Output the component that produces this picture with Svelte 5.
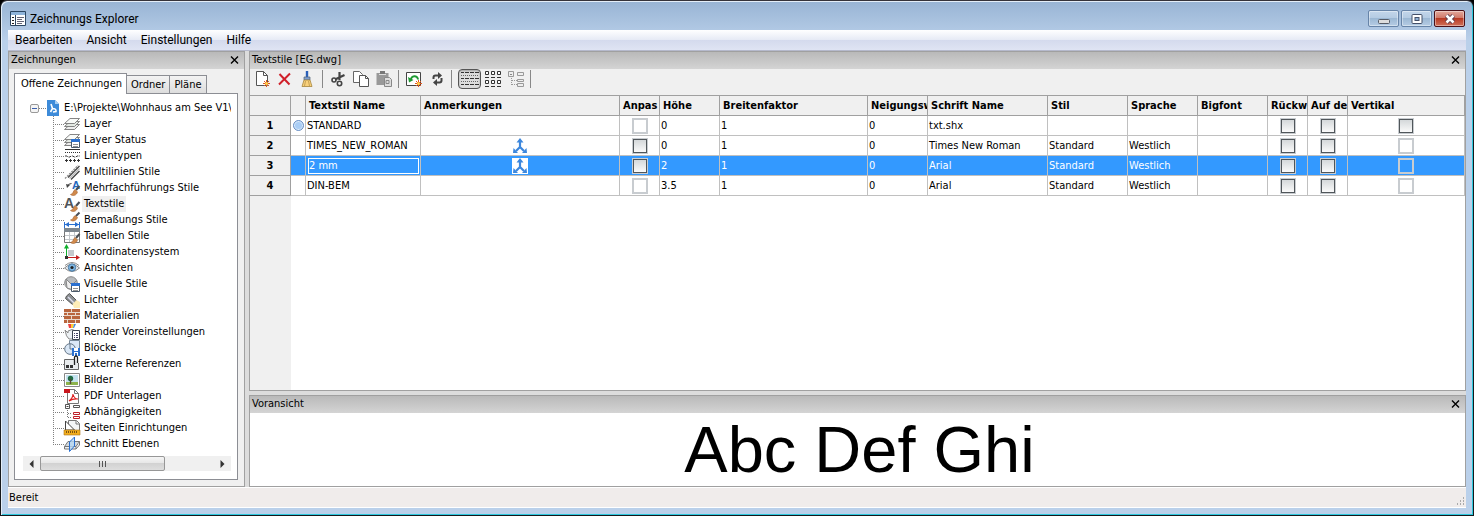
<script>
  const menus = ['Bearbeiten', 'Ansicht', 'Einstellungen', 'Hilfe']
  const tabs = ['Offene Zeichnungen', 'Ordner', 'Pläne']

  const brush = '<path d="M15.500 6l-3.500 4" stroke="#4a4f55" stroke-width="2"/><path d="M6.500 14.500c2.500 0 2.500-3.500 4.500-5l2.500 2.500c-1 3.500-4.500 4.500-7 2.500z" fill="#d08a4c" stroke="#a5602c" stroke-width=".6"/>'
  const win = '<path d="M7.500 7.500h8v8h-8z" fill="#fff" stroke="#4a5a6a"/><path d="M7 7h9v3H7z" fill="#2a70d0"/><path d="M9 12.500h5M9 14.500h5" stroke="#777" stroke-width=".8"/>'
  const layers = '<path d="M6 8.500h9.500l-5 5H.500z" fill="#eee" stroke="#777" stroke-width=".9"/><path d="M6 5.500h9.500l-5 5H.500z" fill="#e4eae4" stroke="#777" stroke-width=".9"/><path d="M6 2.500h9.500l-5 5H.500z" fill="#f8faf8" stroke="#777" stroke-width=".9"/>'

  const icons = {
    app: '<path d="M.500.500h15v14H.500z" fill="#fff" stroke="#2d4763"/><path d="M1 1h14v3H1z" fill="#8fb4da"/><path d="M5.500 4v10" stroke="#2d4763"/><path d="M2 6.500h2M2 9.500h2M2 12.500h2" stroke="#222"/><path d="M7 6.500h7M7 8.500h5M7 10.500h7M7 12.500h5" stroke="#667"/>',
    layer: layers,
    layerState: layers + win,
    linetype: '<path d="M1 1.500h15" stroke="#333"/><path d="M1 4.500h15" stroke="#333" stroke-dasharray="1 1"/><path d="M1 8h2l1 1h2l1-1h2l1 1h2l1-1h3" fill="none" stroke="#333" stroke-dasharray="3 1"/><path d="M1 12.500h3m1 0h3m1 0h3m1 0h3M2.500 11v3m4-3v3m4-3v3m4-3v3" stroke="#333"/>',
    multiline: '<path d="M4 13.500L15.500 2M7 15.500L15.500 7" stroke="#444" stroke-width="1.300"/><path d="M5.500 14.500L15.500 4.500" stroke="#bbb" stroke-width="1.500"/><path d="M1 14.500L14 1.500" stroke="#888" stroke-width="1.300" stroke-dasharray="2 1"/>',
    mleader: '<text x="8" y="9" font-size="11" font-weight="bold" font-family="Liberation Sans, sans-serif" fill="#2468bd">A</text><path d="M3.500 6.500Q4 3.500 7.500 3.500" stroke="#444" fill="none"/><path d="M2 4l4 1-3 3z" fill="#444"/>' + brush,
    textstyle: '<text x="0" y="12" font-size="14" font-weight="bold" font-family="Liberation Sans, sans-serif" fill="#50555a">A</text>' + brush,
    dimstyle: '<path d="M15.500.500l-3.500 3.500" stroke="#4a4f55" stroke-width="2"/><path d="M6.500 8c2.500 0 2.500-3 4.500-4.500l2.500 2c-1 3-4.500 4.500-7 2.500z" fill="#d08a4c" stroke="#a5602c" stroke-width=".6"/><path d="M.500 10v6M15.500 10v6M1 12.500h14" stroke="#2a70d0"/><path d="M1 12.500l4-2.500v5zM15 12.500l-4-2.500v5z" fill="#2a70d0"/>',
    tablestyle: '<path d="M.500.500h15v14H.500z" fill="#fff" stroke="#777"/><path d="M0 0h16v4H0z" fill="#7d868e"/><path d="M1 7.500h14M1 11.500h14M5.500 4v10M10.500 4v10" stroke="#c4c8cc"/>' + brush,
    ucs: '<path d="M4 6h6v6H4z" fill="#c4c9cd"/><path d="M2.500 13V3" stroke="#0fae2c"/><path d="M0 4.500L2.500 0 5 4.500z" fill="#0fae2c"/><path d="M3 13.500h10" stroke="#c41f1f"/><path d="M12 11l4 2.500-4 2.500z" fill="#c41f1f"/><path d="M1 12h3v3H1z" fill="#333"/>',
    view: '<path d="M.500 8Q8 .500 15.500 8 8 15 .500 8z" fill="#e4e8ec" stroke="#888"/><circle cx="8" cy="7.500" r="3.700" fill="#7db6e2" stroke="#4a7aa4"/><circle cx="8" cy="7.500" r="1.600" fill="#222"/><path d="M1 5.500Q8-.500 15 5.500" fill="none" stroke="#888"/>',
    visual: '<circle cx="7" cy="7" r="6.300" fill="#b9bcbf" stroke="#888"/><path d="M2 3l6 6V13.500L3 12zM8 9l5-5" fill="#eee" stroke="#888"/>' + win,
    light: '<path d="M2.500 4l3-2.500 7 7-4 4-7-6z" fill="#8a8e91" stroke="#555"/><path d="M4 5l6 6" stroke="#dde" stroke-width="1.400"/><path d="M8.500 12l4-4 3.500 2v6h-6z" fill="#ffeeb8"/>',
    material: '<path d="M0 1h16v14H0z" fill="#e9d8cc"/><path d="M0 1h7v3H0zM8 1h8v3H8zM0 5h3v2H0zM4 5h7v2H4zM12 5h4v2h-4zM0 8h7v3H0zM8 8h8v3H8zM0 12h3v3H0zM4 12h7v3H4zM12 12h4v3h-4z" fill="#b9653d"/>',
    render: '<path d="M4 0h3v4H5z" fill="#e44"/><path d="M7 0h3l-1 4H7z" fill="#fc3"/><path d="M10 0h2l-2 4H9z" fill="#48d"/><path d="M1 6l3 3V7q4-3 8 0v8H5Q2 13 1 6z" fill="#edf1f4" stroke="#888"/><path d="M8.500 6.500h7v9h-7z" fill="#fff" stroke="#3c4650"/><path d="M10 9.500h1m1 0h2M10 11.500h1m1 0h2M10 13.500h1m1 0h2" stroke="#446"/>',
    block: '<path d="M5.500.500h10v10h-10z" fill="#dbe8f7" stroke="#789"/><circle cx="6" cy="9" r="5.300" fill="#d9e7f6" stroke="#667788"/><path d="M6 4v5h5" fill="none" stroke="#678"/><path d="M8 8h8v8H8z" fill="#2a70d0"/><path d="M10 8h4v3h-4zM10 12h4v4h-4z" fill="#fff"/><path d="M11 13h2v3h-2z" fill="#2a70d0"/>',
    xref: '<path d="M10 3.500H.500v10h14V7" fill="#e9ecee" stroke="#666"/><path d="M2 9h3v3H2zM6 9h3v3H6z" fill="#333"/><path d="M10.500 9V1.500a1 1 0 0 1 3 0V7" fill="none" stroke="#222" stroke-width="1.300"/>',
    image: '<path d="M.500 1.500h15v13H.500z" fill="#fff" stroke="#888"/><path d="M2 3h12v7H2z" fill="#c4e2ef"/><path d="M2 10h12v3H2z" fill="#8cb34c"/><circle cx="6.500" cy="6.500" r="2.700" fill="#226b45"/><path d="M6.500 7v5" stroke="#543" stroke-width="1.400"/>',
    pdf: '<path d="M3.500 1.500h7l4 4v10h-11z" fill="#fff" stroke="#777"/><path d="M10.500 1.500v4h4" fill="none" stroke="#777"/><path d="M0 1h6v4H0z" fill="#c9171e"/><path d="M5 13q4-3 4-7 1 5 5 5-5-.500-9 2z" fill="none" stroke="#d22" stroke-width="1.200"/>',
    depend: '<path d="M1.500.500h4v4h-4zM9.500 1.500h6v2h-6z" fill="#fff" stroke="#555"/><path d="M2.500 2.500h2" stroke="#444"/><path d="M3.500 6v8M4 9.500h4M4 13.500h4" stroke="#777" stroke-dasharray="1 1"/><path d="M9.500 8.500h6v2h-6zM9.500 12.500h6v2h-6z" fill="#fff" stroke="#c0202a"/>',
    page: '<path d="M4.500.500h8l3 3v10h-11z" fill="#f4f6f7" stroke="#777"/><path d="M1.500 10V1l9 9z" fill="#fff" stroke="#444"/><path d="M12 1v3h3" fill="none" stroke="#777"/><path d="M0 10h16v5H0z" fill="#f3ae1e" stroke="#a9741a" stroke-width=".6"/><path d="M2.500 11v2m2-2v2m2-2v2m2-2v2m2-2v2m2-2v2" stroke="#7c5310"/>',
    section: '<path d="M4 5.500h11.500L12 10.500H.500z" fill="#d3d9dc" stroke="#777"/><path d="M.500 10.500h11.500v2.500H.500zM15.500 5.500V9L12 13" fill="#eef1f2" stroke="#777"/><path d="M5.500 6l5-5v9l-5 5.500z" fill="#b8d8f4" fill-opacity=".8" stroke="#2a70d0"/>',
    root: '<path d="M1 0h8l4 4v12H1z" fill="#3d8bd9"/><path d="M9 0l4 4H9z" fill="#a9cff2"/><path d="M5 4l1.500 4.500L4.500 12M6.500 8.500q4 0 3.500 3l-3 .500" fill="none" stroke="#fff" stroke-width="1.600"/>',
    newItem: '<path d="M2.500.500h7l4 4v10h-11z" fill="#fff" stroke="#555"/><path d="M9.500.500v4h4" fill="none" stroke="#555"/><path d="M9 12.500h7M12.500 9v7M10 10l5 5M15 10l-5 5" stroke="#e2571f"/><circle cx="12.500" cy="12.500" r="1.500" fill="#ffd24a"/>',
    remove: '<path d="M2.500 3l10 10.500M13 2.500L2 13.500" stroke="#d0202a" stroke-width="2"/>',
    broom: '<path d="M7 0v7" stroke="#2a60b8" stroke-width="2.400"/><path d="M4 6h6v3H4z" fill="#7f9fd0" stroke="#567" stroke-width=".7"/><path d="M4 9h6l2 6.500H2z" fill="#f9d17c" stroke="#a5843c" stroke-width=".8"/><path d="M5.500 10l-1 5m4-5l1 5" stroke="#b8934a" stroke-width=".8"/>',
    cut: '<path d="M9.500 1v8M14.500 4L5 8.500" stroke="#444" stroke-width="2.200"/><circle cx="4" cy="9" r="2" fill="none" stroke="#444" stroke-width="1.600"/><circle cx="9.500" cy="12.500" r="2.200" fill="none" stroke="#444" stroke-width="1.600"/>',
    copy: '<path d="M.500.500h6l3 3v8h-9z" fill="#fff" stroke="#666"/><path d="M6.500 4.500h6l3 3v8h-9z" fill="#fff" stroke="#555"/><path d="M12.500 4.500v3h3" fill="none" stroke="#555"/>',
    paste: '<path d="M.500 2h12v12H.500z" fill="#999"/><path d="M4 0h5v3H4z" fill="#777"/><path d="M3 3.500h7" stroke="#ddd"/><path d="M8.500 6.500h5l2 2v7h-7z" fill="#ddd" stroke="#888"/><path d="M10 9.500h3v3h-3z" fill="none" stroke="#888"/>',
    regen: '<path d="M.500 1.500h14v13H.500z" fill="#fff" stroke="#444"/><path d="M5 9a3.500 3.500 0 0 1 7-.500" fill="none" stroke="#1d9a32" stroke-width="2"/><path d="M2 6l1 5.500 4.500-2.500z" fill="#1d9a32"/><path d="M9 12.500h7M12.500 9v7M10 10l5 5M15 10l-5 5" stroke="#e2571f"/><circle cx="12.500" cy="12.500" r="1.500" fill="#ffd24a"/>',
    sync: '<path d="M4.500 8V6.500q0-2 2-2h3" fill="none" stroke="#444" stroke-width="2"/><path d="M9 1l4 3.500L9 8z" fill="#444"/><path d="M12.500 7v2.500q0 2-2 2H8" fill="none" stroke="#444" stroke-width="2"/><path d="M8 8l-4 3.500L8 15z" fill="#444"/>',
    details: '<path d="M-1 1.500h3m1 0h4m1 0h4m1 0h4M-1 7.500h3m1 0h4m1 0h4m1 0h4M-1 13.500h3m1 0h4m1 0h4m1 0h4" stroke="#333"/><path d="M-1 4.500h18M-1 10.500h18" stroke="#666" stroke-dasharray="1 1"/>',
    grid: '<path d="M.500.500h3v3h-3zm6 0h3v3h-3zm6 0h3v3h-3zm-12 9h3v3h-3zm6 0h3v3h-3zm6 0h3v3h-3z" fill="#fff" stroke="#333"/><path d="M0 6.500h4m2 0h4m2 0h4M0 15.500h4m2 0h4m2 0h4" stroke="#333"/>',
    treeView: '<path d="M.500.500h5v5h-5zM9.500 1.500h6v3h-6zM9.500 8.500h6v2h-6zM9.500 12.500h6v3h-6z" fill="#eee" stroke="#999"/><path d="M2 3.500h2" stroke="#888"/><path d="M3.500 7v7M4 9.500h5M4 13.500h5" stroke="#999" stroke-dasharray="1 1"/>',
    annotative: '<path d="M8 9V3M8 9l-4 4M8 9l4 4" stroke="#3c87dd" stroke-width="2.200"/><path d="M4.500 4.500L8 0l3.500 4.500zM1 15l.500-5 4.500 5zM15 15l-.500-5-4.500 5z" fill="#3c87dd"/>'
  }

  const nodes = [
    ['layer', 'Layer'],
    ['layerState', 'Layer Status'],
    ['linetype', 'Linientypen'],
    ['multiline', 'Multilinien Stile'],
    ['mleader', 'Mehrfachführungs Stile'],
    ['textstyle', 'Textstile'],
    ['dimstyle', 'Bemaßungs Stile'],
    ['tablestyle', 'Tabellen Stile'],
    ['ucs', 'Koordinatensystem'],
    ['view', 'Ansichten'],
    ['visual', 'Visuelle Stile'],
    ['light', 'Lichter'],
    ['material', 'Materialien'],
    ['render', 'Render Voreinstellungen'],
    ['block', 'Blöcke'],
    ['xref', 'Externe Referenzen'],
    ['image', 'Bilder'],
    ['pdf', 'PDF Unterlagen'],
    ['depend', 'Abhängigkeiten'],
    ['page', 'Seiten Einrichtungen'],
    ['section', 'Schnitt Ebenen']
  ]

  // null is a divider
  const tools = [
    ['newItem', 'Neu'], ['remove', 'Löschen'], ['broom', 'Bereinigen'], null,
    ['cut', 'Ausschneiden'], ['copy', 'Kopieren'], ['paste', 'Einfügen'], null,
    ['regen', 'Regenerieren'], ['sync', 'Aktualisieren'], null,
    ['details', 'Details'], ['grid', 'Symbole'], ['treeView', 'Baum'], null
  ]

  const columns = [
    ['Textstil Name', 115],
    ['Anmerkungen', 199],
    ['Anpas', 40],
    ['Höhe', 60],
    ['Breitenfaktor', 148],
    ['Neigungsw', 60],
    ['Schrift Name', 120],
    ['Stil', 80],
    ['Sprache', 70],
    ['Bigfont', 70],
    ['Rückw', 40],
    ['Auf de', 40],
    ['Vertikal', 0]
  ]

  let styles = $state([
    { name: 'STANDARD', current: true, annotative: false, height: '0', font: 'txt.shx', style: '', lang: '', vertical: true },
    { name: 'TIMES_NEW_ROMAN', annotative: true, height: '0', font: 'Times New Roman', style: 'Standard', lang: 'Westlich' },
    { name: '2 mm', annotative: true, height: '2', font: 'Arial', style: 'Standard', lang: 'Westlich' },
    { name: 'DIN-BEM', annotative: false, height: '3.5', font: 'Arial', style: 'Standard', lang: 'Westlich' }
  ])

  let tab = $state(0)
  let node = $state('textstyle')
  let row = $state(2)
  let mode = $state('details')

  function runTool(id) {
    if (['details', 'grid', 'treeView'].includes(id)) mode = id
  }
</script>

{#snippet icon(id)}
  <svg class="icon" width="16" height="16" viewBox="0 0 16 16" fill="none" aria-hidden="true">{@html icons[id]}</svg>
{/snippet}

{#snippet caption(text)}
  <header class="caption">
    <span>{text}</span>
    <button class="shut" aria-label="{text} schließen">
      <svg width="9" height="8" viewBox="0 0 9 8"><path d="M1 .500l7 7M8 .500l-7 7" stroke="#000" stroke-width="1.400" /></svg>
    </button>
  </header>
{/snippet}

<div class="window">
  <div class="titlebar">
    {@render icon('app')}
    <h1>Zeichnungs Explorer</h1>
    <div class="controls">
      <button aria-label="Minimieren"><svg width="12" height="12" viewBox="0 0 12 12"><rect x=".5" y="6.500" width="11" height="4" rx="1" fill="#ddd" stroke="#555b66" /></svg></button>
      <button aria-label="Maximieren"><svg width="12" height="12" viewBox="0 0 12 12"><rect x="1" y="1.500" width="10" height="9" rx="1" fill="#fff" stroke="#445069" /><rect x="4" y="4.500" width="4" height="3" fill="#8fb0d4" stroke="#445069" /></svg></button>
      <button class="exit" aria-label="Schließen"><svg width="12" height="12" viewBox="0 0 12 12"><path d="M2.500 2.500l7 7M9.500 2.500l-7 7" stroke="#5c4050" stroke-width="4.500" /><path d="M2.500 2.500l7 7M9.500 2.500l-7 7" stroke="#fff" stroke-width="2.500" /></svg></button>
    </div>
  </div>

  <nav class="menu">
    {#each menus as item}<button>{item}</button>{/each}
  </nav>

  <main>
    <section class="panel explorer">
      {@render caption('Zeichnungen')}
      <div class="tabs" role="tablist">
        {#each tabs as label, i}
          <button role="tab" aria-selected={tab === i} class:active={tab === i} onclick={() => (tab = i)}>{label}</button>
        {/each}
      </div>
      <div class="page">
        <div class="root">
          <button class="toggle" aria-label="Zuklappen"></button>
          <i class="dots"></i>
          {@render icon('root')}
          <span>E:\Projekte\Wohnhaus am See V1\</span>
        </div>
        <ul>
          {#each nodes as [id, label]}
            <li>
              <i class="dots"></i>
              <button class:selected={node === id} onclick={() => (node = id)}>
                {@render icon(id)}<span>{label}</span>
              </button>
            </li>
          {/each}
        </ul>
        <div class="scrollbar">
          <button aria-label="Nach links"><svg width="5" height="8" viewBox="0 0 5 8"><path d="M4.500 0v8L.500 4z" fill="#333" /></svg></button>
          <div class="track"><div class="thumb"><svg width="8" height="6" viewBox="0 0 8 6"><path d="M.500 0v6M3.500 0v6M6.500 0v6" stroke="#555" /></svg></div></div>
          <button aria-label="Nach rechts"><svg width="5" height="8" viewBox="0 0 5 8"><path d="M.500 0v8l4-4z" fill="#333" /></svg></button>
        </div>
      </div>
    </section>

    <div class="right">
      <section class="panel list">
        {@render caption('Textstile [EG.dwg]')}
        <div class="toolbar" role="toolbar">
          {#each tools as tool}
            {#if tool}
              <button
                aria-label={tool[1]}
                class:first={tool[0] === 'details'}
                class:pressed={mode === tool[0]}
                onclick={() => runTool(tool[0])}
              >{@render icon(tool[0])}</button>
            {:else}
              <hr>
            {/if}
          {/each}
        </div>
        <div class="sheet">
          <table>
            <colgroup>
              <col style:width="41px"><col style:width="15px">
              {#each columns as [, width]}<col style:width={width ? `${width}px` : 'auto'}>{/each}
            </colgroup>
            <thead>
              <tr>
                <th></th><th></th>
                {#each columns as [label]}<th>{label}</th>{/each}
              </tr>
            </thead>
            <tbody>
              {#each styles as s, i}
                <tr class:selected={row === i} onclick={() => (row = i)}>
                  <th scope="row">{i + 1}</th>
                  <td class="mark">{#if s.current}<i class="current"></i>{/if}</td>
                  <td class="name">
                    {#if row === i}<input type="text" aria-label="Textstil Name" bind:value={s.name}>{:else}{s.name}{/if}
                  </td>
                  <td class="mid">{#if s.annotative}<span class="anno">{@render icon('annotative')}</span>{/if}</td>
                  <td class="mid"><input type="checkbox" aria-label="Anpassen" disabled={!s.annotative}></td>
                  <td>{s.height}</td>
                  <td>1</td>
                  <td>0</td>
                  <td>{s.font}</td>
                  <td>{s.style}</td>
                  <td>{s.lang}</td>
                  <td></td>
                  <td class="mid"><input type="checkbox" aria-label="Rückwärts"></td>
                  <td class="mid"><input type="checkbox" aria-label="Auf dem Kopf"></td>
                  <td class="mid"><input type="checkbox" aria-label="Vertikal" disabled={!s.vertical}></td>
                </tr>
              {/each}
            </tbody>
          </table>
        </div>
      </section>

      <section class="panel preview">
        {@render caption('Voransicht')}
        <p>Abc Def Ghi</p>
      </section>
    </div>
  </main>

  <footer>
    <span>Bereit</span>
    <svg width="12" height="12" viewBox="0 0 12 12"><path d="M9 3h1M6 6h1m2 0h1M3 9h1m2 0h1m2 0h1" stroke="#aaa" stroke-width="2" /></svg>
  </footer>
</div>

<style>
  :global(body) {
    margin: 0;
    background: #000;
  }

  .window {
    display: flex;
    flex-direction: column;
    box-sizing: border-box;
    min-height: 100vh;
    padding: 0 7px 7px;
    border: 1px solid #15181c;
    border-top-color: #35333a;
    border-radius: 7px 7px 0 0;
    background: linear-gradient(#98b4d4, #bad0ea 40px, #bad0ea);
    box-shadow: inset 1px 1px #e4eef8, inset -1px -1px #2cc8dd;
    font: 11px/16px "DejaVu Sans Condensed", "Noto Sans", sans-serif;
    color: #000;
  }

  button {
    padding: 0;
    border: 0;
    background: none;
    font: inherit;
    color: inherit;
  }

  svg {
    display: block;
    flex: none;
  }

  .icon {
    overflow: visible;
  }

  .titlebar {
    display: flex;
    align-items: center;
    gap: 4px;
    height: 29px;
    padding: 6px 1px 0 2px;
    box-sizing: border-box;
  }

  h1 {
    flex: 1;
    margin: 0;
    font: 12px/16px Roboto, "Open Sans", sans-serif;
  }

  .controls {
    display: flex;
    gap: 2px;
  }

  .controls button {
    display: grid;
    place-items: center;
    box-sizing: border-box;
    width: 31px;
    height: 17px;
    border: 1px solid #6784a8;
    border-radius: 2px;
    background: linear-gradient(#c3d6ea, #b3cae2 50%, #9cb8d4 50%, #b5cce4);
    box-shadow: inset 0 0 0 1px #ffffff66;
  }

  .controls .exit {
    border-color: #4b1017;
    background: linear-gradient(#e3a99c, #cf7463 50%, #b83a23 50%, #d0715a);
  }

  .menu {
    display: flex;
    gap: 14px;
    height: 20px;
    padding: 0 7px;
    background: linear-gradient(#fff, #e6eaf5 50%, #d4daed 50%, #dfe4f3);
    border-bottom: 1px solid #b5b9cc;
    font: 12px/20px Roboto, "Open Sans", sans-serif;
  }

  main {
    display: flex;
    gap: 4px;
    flex: 1;
    background: #dcdcdc;
    min-width: 0;
  }

  .panel {
    display: flex;
    flex-direction: column;
    box-sizing: border-box;
    border: 1px solid #a0a0a0;
    background: #f0f0f0;
  }

  .explorer {
    flex: none;
    width: 237px;
  }

  .right {
    display: flex;
    flex-direction: column;
    flex: 1;
    gap: 4px;
    min-width: 0;
  }

  .list {
    flex: 1;
  }

  .caption {
    display: flex;
    align-items: center;
    justify-content: space-between;
    height: 17px;
    padding: 0 5px 2px 2px;
    box-sizing: border-box;
    background: linear-gradient(#b9b9b9, #d4d4d4);
  }

  .tabs {
    display: flex;
    align-items: flex-end;
    height: 24px;
    padding-left: 5px;
  }

  .tabs button {
    height: 18px;
    padding: 0 4px;
    border: 1px solid #8c8e94;
    border-width: 1px 1px 0 0;
    background: linear-gradient(#f3f3f3, #ddd);
  }

  .tabs .active {
    position: relative;
    height: 21px;
    margin-bottom: -1px;
    padding: 0 4px 0 6px;
    border-left-width: 1px;
    background: #fff;
  }

  .page {
    flex: 1;
    margin: 0 6px 6px 5px;
    padding: 6px 6px 7px 8px;
    border: 1px solid #8c8e94;
    background: #fff;
    overflow: hidden;
  }

  .root {
    display: flex;
    align-items: center;
    height: 16px;
    padding-left: 7px;
    overflow: hidden;
    white-space: nowrap;
  }

  .root span {
    flex: 1;
    margin-left: 2px;
    overflow: hidden;
  }

  .toggle {
    flex: none;
    width: 9px;
    height: 9px;
    border: 1px solid #999;
    border-radius: 2px;
    background: linear-gradient(#3a5fae, #3a5fae) center / 5px 1px no-repeat, #f4f4f4;
  }

  .dots {
    flex: none;
    width: 7px;
    height: 1px;
    background: repeating-linear-gradient(90deg, #808080 0 1px, transparent 1px 2px);
  }

  ul {
    margin: 0 0 0 30px;
    padding: 0;
    list-style: none;
    background: repeating-linear-gradient(#808080 0 1px, transparent 1px 2px) 0 0 / 1px calc(100% - 8px) no-repeat;
  }

  li {
    display: flex;
    align-items: center;
    height: 16px;
  }

  li .dots {
    width: 11px;
  }

  li button {
    display: flex;
    gap: 2px;
  }

  li span {
    padding: 0 2px;
    white-space: nowrap;
  }

  li .selected span {
    background: #f0f0f0;
  }

  .scrollbar {
    display: flex;
    height: 15px;
    margin-top: 4px;
    background: #f0f0f0;
  }

  .scrollbar button {
    display: grid;
    place-items: center;
    width: 17px;
  }

  .track {
    flex: 1;
  }

  .thumb {
    display: grid;
    place-items: center;
    box-sizing: border-box;
    width: 72%;
    height: 15px;
    border: 1px solid #979797;
    border-radius: 2px;
    background: linear-gradient(#f5f5f5, #e6e6e6 50%, #d2d2d2 50%, #dedede);
  }

  .toolbar {
    display: flex;
    align-items: center;
    height: 20px;
    padding-bottom: 6px;
  }

  .toolbar button {
    display: grid;
    place-items: center;
    box-sizing: border-box;
    width: 23px;
    height: 20px;
  }

  .toolbar .first {
    margin-left: 3px;
  }

  .toolbar .pressed {
    border: 1px solid #555;
    border-radius: 4px;
    background: #dcdcdc;
    box-shadow: inset 0 1px 2px #0004;
  }

  .toolbar hr {
    width: 1px;
    height: 18px;
    margin: 0 3px;
    border: 0;
    background: #888;
  }

  .sheet {
    flex: 1;
    background: linear-gradient(#f0f0f0, #f0f0f0) 0 0 / 41px 100% no-repeat, #fff;
  }

  table {
    width: 100%;
    table-layout: fixed;
    border-spacing: 0;
    border-top: 1px solid #a0a0a0;
  }

  th, td {
    box-sizing: border-box;
    height: 20px;
    padding: 1px 0 0 1px;
    border-right: 1px solid #c0c0c0;
    border-bottom: 1px solid #c0c0c0;
    line-height: 18px;
    text-align: left;
    white-space: nowrap;
    overflow: hidden;
    background: #fff;
  }

  th {
    padding-left: 3px;
    border-color: #a0a0a0;
    background: #f0f0f0;
  }

  tbody th {
    padding-left: 0;
    text-align: center;
  }

  tr.selected td {
    background: #3399ff;
    color: #fff;
  }

  td.mid {
    padding: 0;
    text-align: center;
  }

  td.mark {
    padding: 0 0 0 2px;
  }

  .current {
    display: block;
    box-sizing: border-box;
    width: 11px;
    height: 11px;
    border: 1px solid #6a8fc4;
    border-radius: 50%;
    background: #a9cdf5;
    box-shadow: inset 0 0 0 1px #dcebfb;
  }

  .anno {
    display: inline-block;
    vertical-align: middle;
  }

  .selected .anno {
    background: #fff;
  }

  input[type="text"] {
    display: block;
    box-sizing: border-box;
    width: 111px;
    height: 16px;
    margin-left: 1px;
    padding: 0;
    border: 1px solid #fff;
    background: #3399ff;
    font: inherit;
    color: #fff;
    outline: 0;
  }

  input[type="checkbox"] {
    appearance: none;
    display: block;
    box-sizing: border-box;
    width: 14px;
    height: 14px;
    margin: 0 auto;
    border: 1px solid #50565a;
    background: linear-gradient(#d4d8da, #fafafa);
    box-shadow: 0 0 0 1px #c8ccd0;
  }

  input[type="checkbox"]:disabled {
    border-color: #c8ccd0;
    background: none;
  }

  .preview {
    height: 92px;
    background: #fff;
  }

  p {
    margin: 0;
    padding-left: 4px;
    font: 65px/74px "Liberation Sans", Arial, sans-serif;
    text-align: center;
  }

  footer {
    display: flex;
    align-items: flex-end;
    justify-content: space-between;
    height: 19px;
    border-top: 1px solid #fff;
    border-bottom: 1px solid #fff;
    background: #f0eceb;
    line-height: 19px;
  }

  footer span {
    padding-left: 1px;
  }
</style>
